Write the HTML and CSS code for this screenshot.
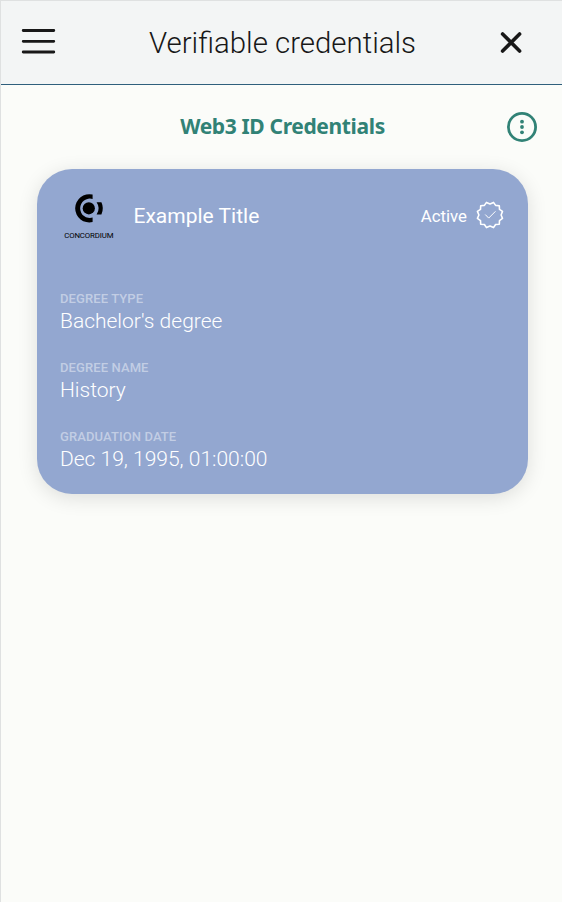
FILE: index.html
```html
<!DOCTYPE html>
<html lang="en">
<head>
<meta charset="utf-8">
<title>Verifiable credentials</title>
<link rel="stylesheet" href="styles.css">
</head>
<body>
<div class="app">
  <header class="header">
    <svg class="menu" width="35" height="27" viewBox="0 0 35 27"><path d="M2.2 2.5H32.8M2.2 13.3H32.8M2.2 24H32.8"/></svg>
    <h1 class="title">Verifiable credentials</h1>
    <svg class="close" width="22" height="22" viewBox="0 0 22 22"><path d="M2.6 3L19.6 20M19.6 3L2.6 20"/></svg>
  </header>
  <div class="subheader">
    <h2 class="subtitle">Web3 ID Credentials</h2>
    <svg class="more" width="30" height="30" viewBox="0 0 30 30"><circle class="ring" cx="15" cy="15" r="13.6"/><circle cx="15" cy="9.7" r="1.9"/><circle cx="15" cy="15" r="1.9"/><circle cx="15" cy="20.3" r="1.9"/></svg>
  </div>
  <main class="card">
    <div class="card-head">
      <svg class="logo" width="54" height="48" viewBox="0 0 54 48">
        <path d="M30.6 3.6A14.1 14.1 0 1 0 30.6 31V26.6A9.7 9.7 0 1 1 30.6 8Z"/>
        <circle cx="26.8" cy="17.3" r="6.1"/>
        <path d="M34.6 11.2H39.4A14.3 14.3 0 0 1 39.4 23.4H34.6A10.8 10.8 0 0 0 34.6 11.2Z"/>
        <text transform="translate(2.2 47) scale(1.15 1)" x="0" y="0" textLength="43" lengthAdjust="spacing">CONCORDIUM</text>
      </svg>
      <span class="card-title">Example Title</span>
      <span class="status">Active</span>
      <svg class="badge" width="28" height="28" viewBox="0 0 28 28"><path class="seal" d="M14 2.9L17.5 1.4L19.6 4.4L23.3 4.7L23.5 8.4L26.5 10.4L25.1 14L26.5 17.4L23.5 19.6L23.3 23.3L19.6 23.5L17.5 26.6L14 25.1L10.5 26.6L8.4 23.5L4.7 23.3L4.5 19.6L1.4 17.4L2.9 14L1.4 10.4L4.5 8.4L4.7 4.7L8.4 4.4L10.5 1.4Z"/><path class="tick" d="M9.5 13.8L12.7 17.1L19.2 10.6"/></svg>
    </div>
    <dl class="attributes">
      <div><dt>DEGREE TYPE</dt><dd>Bachelor's degree</dd></div>
      <div><dt>DEGREE NAME</dt><dd>History</dd></div>
      <div><dt>GRADUATION DATE</dt><dd>Dec 19, 1995, 01:00:00</dd></div>
    </dl>
  </main>
</div>
</body>
</html>
```
FILE: styles.css
```css
* { box-sizing: border-box; }
body { margin: 0; font-family: Roboto, sans-serif; background: #fbfcf9; }
h1, h2, dl, dt, dd { margin: 0; }
svg { display: block; flex: none; }
.app { height: 902px; border-left: 1px solid #dfe1e1; border-top: 1px solid #dfe1e1; overflow: hidden; }
.header { height: 84px; display: flex; align-items: center; justify-content: space-between; padding: 0 40px 2px 20px; background: #f3f5f5; border-bottom: 1px solid #2f5f7c; }
.menu, .close { fill: none; stroke: #181818; stroke-linecap: round; }
.menu { stroke-width: 2.8; }
.close { stroke-width: 3.6; }
.title { font-size: 29.4px; font-weight: 300; line-height: 40px; color: #181818; white-space: nowrap; padding: 2px 0 0 9px; }
.subheader { height: 84px; display: grid; grid-template-columns: 1fr auto 1fr; align-items: center; padding: 0 25px 0 27px; }
.subtitle { grid-column: 2; font: 700 21px/30px "Noto Sans", sans-serif; letter-spacing: -.35px; color: #318276; white-space: nowrap; padding-bottom: 2px; }
.more { grid-column: 3; justify-self: end; fill: #318276; }
.ring { fill: none; stroke: #318276; stroke-width: 2.8; }
.card { width: 491px; height: 325px; margin-left: 36px; border-radius: 35px; padding: 22px 24px 22px 23px; background: #93a7d0; color: #fff; box-shadow: 0 4px 20px rgba(0, 0, 0, .12); }
.card-head { display: flex; align-items: center; height: 48px; }
.logo { margin-left: 2px; fill: #000; }
.logo text { font: 400 6.8px Roboto, sans-serif; }
.card-title { margin-left: 17.5px; padding-top: 2px; font-size: 21px; flex: 1; }
.status { font-size: 16.8px; font-weight: 400; margin-right: 9px; padding-top: 2px; }
.badge { fill: none; stroke: #fff; stroke-linejoin: round; }
.seal { stroke-width: 1.6; }
.tick { stroke-width: 1; stroke-linecap: round; }
.attributes { padding-top: 52px; display: grid; row-gap: 29px; }
.attributes > div { height: 40px; }
dt { font-size: 13px; line-height: 15px; font-weight: 500; letter-spacing: .1px; color: rgba(255, 255, 255, .45); }
dd { font-size: 21px; line-height: 31px; font-weight: 300; }
```
